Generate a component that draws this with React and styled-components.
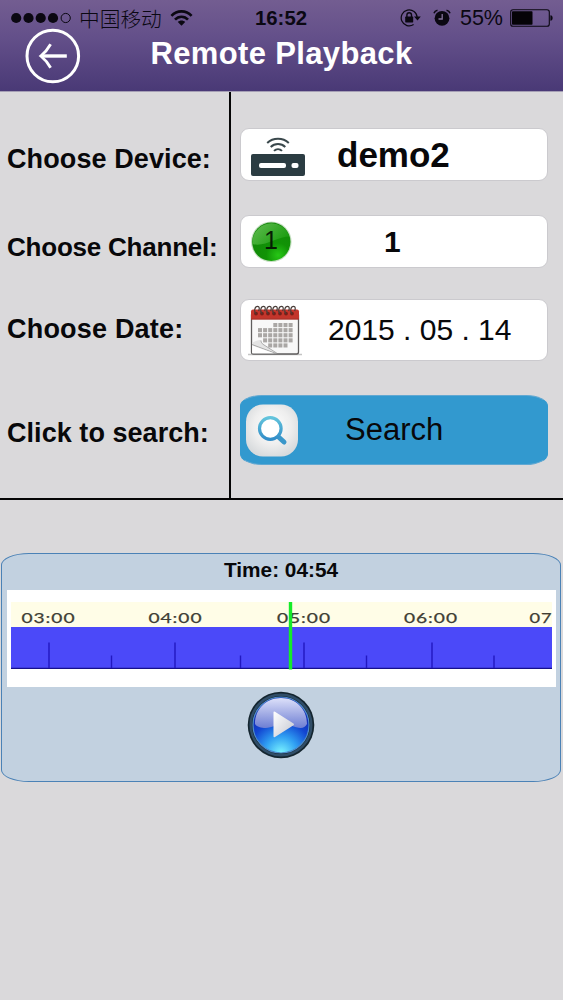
import React from "react"
import styled, { createGlobalStyle } from "styled-components"

const GlobalStyle = createGlobalStyle`
  body {
    margin: 0;
    background: #dad9db;
    font-family: "Liberation Sans", Arial, "Noto Sans CJK SC", sans-serif;
    color: #08080a;
  }
  * {
    box-sizing: border-box;
  }
  svg {
    display: block;
    flex: none;
  }
`

const Page = styled.div`
  width: 563px;
  height: 1000px;
  overflow: hidden;
`

const Header = styled.header`
  height: 92px;
  background: linear-gradient(#735d91, #64508a 40%, #493976);
  border-bottom: 1px solid #a59fb5;
`

const StatusBar = styled.div`
  display: grid;
  grid-template-columns: 1fr 60px 1fr;
  align-items: center;
  height: 36px;
  padding: 0 10px 0 11px;
  color: #0b0812;
`

const StatusGroup = styled.div`
  display: flex;
  align-items: center;
  justify-content: ${({ end }) => (end ? "flex-end" : "flex-start")};
`

const Carrier = styled.span`
  margin: 0 8px 0 7px;
  font-family: "Noto Sans CJK SC", sans-serif;
  font-size: 20.7px;
  font-weight: 300;
  line-height: 34px;
`

const Clock = styled.span`
  padding-right: 2px;
  font-size: 20.3px;
  font-weight: 700;
  text-align: center;
`

const Percent = styled.span`
  margin: 0 7px 0 9px;
  font-size: 21.5px;
`

const TitleBar = styled.div`
  display: grid;
  grid-template-columns: 80px 1fr 80px;
`

const BackButton = styled.button`
  width: 56px;
  height: 56px;
  margin: -8px 0 0 25px;
  padding: 0;
  border: 0;
  background: none;
`

const Title = styled.h1`
  margin: 0;
  font-size: 31px;
  line-height: 36px;
  letter-spacing: 0.35px;
  text-align: center;
  white-space: nowrap;
  color: #fff;
`

const Form = styled.section`
  display: grid;
  grid-template-columns: 231px 1fr;
  height: 408px;
  border-bottom: 2px solid #050505;
`

const Labels = styled.div`
  padding: 51px 0 0 7px;
  border-right: 2px solid #050505;
`

const Label = styled.div`
  height: 32px;
  margin-bottom: ${({ gap }) => gap || 0}px;
  font-size: ${({ size }) => size || 27}px;
  font-weight: 700;
  line-height: 32px;
  letter-spacing: ${({ tracking }) => tracking || 0}px;
  white-space: nowrap;
`

const Fields = styled.div`
  padding: 36px 15px 0 9px;
`

const Field = styled.button`
  display: grid;
  grid-template-columns: 64px 1fr;
  align-items: center;
  width: 308px;
  height: ${({ height }) => height}px;
  margin: 0 0 ${({ gap }) => gap}px;
  padding: 0;
  border: 1px solid #cbcace;
  border-radius: 9px;
  background: #fff;
  font-family: inherit;
  color: #08080a;
`

const SearchButton = styled(Field)`
  border-color: #61a8d2 #3299cf;
  border-radius: 22px / 11px;
  background: #3299cf;
`

const Value = styled.span`
  padding-left: ${({ indent }) => indent}px;
  font-size: ${({ size }) => size || 30}px;
  font-weight: ${({ bold }) => (bold ? 700 : 400)};
  line-height: 36px;
  text-align: left;
  white-space: pre;
`

const Player = styled.section`
  display: flex;
  flex-direction: column;
  align-items: center;
  width: 560px;
  height: 229px;
  margin: 53px 0 0 1px;
  border: 1px solid #4b82b6;
  border-radius: 28px / 12px;
  background: #c2d1e0;
`

const Time = styled.div`
  height: 36px;
  font-size: 20.8px;
  font-weight: 700;
  line-height: 31px;
`

const Timeline = styled.div`
  width: 549px;
  height: 97px;
  background: #fff;
`

const PlayButton = styled.button`
  margin-top: 4px;
  padding: 0;
  border: 0;
  background: none;
`

const SignalDots = () => (
  <svg width="61" height="14" viewBox="0 0 61 14">
    {[5.2, 17.5, 29.7, 42].map(x => (
      <circle key={x} cx={x} cy="7" r="5.1" fill="#0b0812" />
    ))}
    <circle cx="54.7" cy="7" r="4.6" fill="none" stroke="#0b0812" strokeWidth="1" />
  </svg>
)

const WifiIcon = () => (
  <svg width="23" height="16" viewBox="0 0 23 16">
    <g fill="none" stroke="#0b0812" strokeWidth="2.6">
      <path d="M1.4 5.9C7-.1 16-.1 21.6 5.9" />
      <path d="M5 9.6c3.6-3.9 9.4-3.9 13 0" />
    </g>
    <path d="M7.8 12c2-2 5.400-2 7.400 0L11.500 15.800z" fill="#0b0812" />
  </svg>
)

const LockIcon = () => (
  <svg width="22" height="20" viewBox="0 0 22 20">
    <path d="M13.600 16.600A8 8 0 1 1 17.200 9.500" fill="none" stroke="#0b0812" strokeWidth="1.200" />
    <path d="M14 8.500h6.800l-3.300 3.900z" fill="#0b0812" />
    <rect x="5.200" y="8.600" width="8" height="5.800" rx=".6" fill="#0b0812" />
    <path d="M6.900 9V7a2.300 2.300 0 0 1 4.600 0v2" fill="none" stroke="#0b0812" strokeWidth="1.400" />
  </svg>
)

const AlarmIcon = () => (
  <svg width="18" height="18" viewBox="0 0 18 18">
    <circle cx="9" cy="9.300" r="7.400" fill="#0b0812" />
    <path d="M1 4.200C1.500 2.600 2.800 1.500 4.500 1.200M17 4.200c-.5-1.600-1.800-2.700-3.500-3" fill="none" stroke="#0b0812" strokeWidth="1.600" />
    <path d="M9.200 5v5H5.500" fill="none" stroke="#85739c" strokeWidth="1.300" />
  </svg>
)

const BatteryIcon = () => (
  <svg width="43" height="18" viewBox="0 0 43 18">
    <rect x=".7" y=".7" width="38.600" height="16.600" rx="2.300" fill="none" stroke="#0b0812" strokeWidth="1.100" />
    <rect x="2" y="2.200" width="20.500" height="13.600" rx=".8" fill="#050307" />
    <path d="M40.400 6.200c3 0 3 5.600 0 5.600z" fill="#0b0812" />
  </svg>
)

const BackIcon = () => (
  <svg width="56" height="56" viewBox="0 0 56 56" fill="none" stroke="#fff">
    <circle cx="27.800" cy="28" r="25.800" strokeWidth="3" />
    <path d="M41.800 28H16" strokeWidth="3.400" />
    <path d="M25.600 16.300C23 21 19.500 25 15.800 28c3.700 3 7.200 7 9.800 11.700" strokeWidth="2.800" />
  </svg>
)

const RouterIcon = () => (
  <svg width="64" height="50" viewBox="0 0 64 50">
    <rect x="10" y="24" width="54" height="22" rx="2" fill="#2b3c42" />
    <rect x="18" y="33" width="27" height="5" rx="2" fill="#fff" />
    <rect x="50.500" y="33" width="7" height="5" rx="2" fill="#fff" />
    <g fill="none" stroke="#3a484c" strokeWidth="2">
      <path d="M26.200 12.900c6-5.600 15.600-5.600 21.600 0" />
      <path d="M29.700 17c4-3.900 10.600-3.900 14.600 0" />
      <path d="M33 20.900c2.300-2.300 5.700-2.300 8 0" />
    </g>
  </svg>
)

const ChannelIcon = () => (
  <svg width="64" height="50" viewBox="0 0 64 50">
    <defs>
      <radialGradient id="ball" cx=".68" cy=".85" r=".9">
        <stop offset="0" stopColor="#27c716" />
        <stop offset=".35" stopColor="#119306" />
        <stop offset="1" stopColor="#128509" />
      </radialGradient>
      <linearGradient id="ballShine" x1="0" y1="0" x2="1" y2=".6">
        <stop offset="0" stopColor="#7fd06c" />
        <stop offset="1" stopColor="#1da012" />
      </linearGradient>
    </defs>
    <circle cx="30.300" cy="24.800" r="20.300" fill="#c6dfc2" />
    <circle cx="30.300" cy="24.800" r="19.200" fill="url(#ball)" />
    <path d="M11.500 27A19 19 0 0 1 48.500 19.500C37 19.500 23 30.500 11.500 27z" fill="url(#ballShine)" opacity=".75" />
    <text x="30" y="32" textAnchor="middle" fontSize="25" fill="#071c05">1</text>
  </svg>
)

// columns that hold a day square, one list for each week
const dayRows = [
  [3, 4, 5, 6],
  [0, 1, 2, 3, 4, 5, 6],
  [0, 1, 2, 3, 4, 5, 6],
  [1, 2, 3, 4, 5, 6],
  [2, 3, 4, 5],
]

const CalendarIcon = () => (
  <svg width="64" height="58" viewBox="0 0 64 58">
    <path d="M7 53.500h54" stroke="#c4c4c4" strokeWidth="1.500" />
    <rect x="10.500" y="12" width="47" height="41" rx="2" fill="#f8f8f8" stroke="#5f5d5d" strokeWidth="1.300" />
    <path d="M10 18.500v-8q0-2 2-2h44q2 0 2 2v8z" fill="#c3352b" />
    <path d="M10 18h48" stroke="#9d3029" strokeWidth=".8" />
    {[15, 21, 27, 33, 39, 45, 51].map(x => (
      <g key={x} fill="none">
        <circle cx={x} cy="12.600" r="1.900" fill="#74201a" />
        <path d={`M${x} 12.500c-2.500-2-1.200-7.200 1.600-7.200 2 0 2 2.700 1 4.700`} stroke="#493d39" strokeWidth="1.200" />
      </g>
    ))}
    {dayRows.map((row, r) =>
      row.map(c => (
        <rect key={`${r}-${c}`} x={17 + c * 5.1} y={22 + r * 5.1} width="4" height="4.100" fill="#aaa7a5" />
      ))
    )}
    <path d="M11 42c3.500-2 6-3 9-3 0 2 1.300 4 3 5l12.500 8.300H11z" fill="#e4e4e4" />
    <path d="M11 43.500 35 52.500M20 39.500c0 2 1 3 2 3.800l14 9" fill="none" stroke="#9a9a9a" strokeWidth=".8" />
    <path d="M11.200 44.500 33 52.300H11.200z" fill="#fff" />
  </svg>
)

const SearchIcon = () => (
  <svg width="64" height="67" viewBox="0 0 64 67">
    <defs>
      <radialGradient id="tile" cx=".5" cy=".42" r=".6">
        <stop offset="0" stopColor="#fff" />
        <stop offset=".6" stopColor="#eee" />
        <stop offset="1" stopColor="#d8dbdd" />
      </radialGradient>
      <linearGradient id="lens" x1="0" y1="0" x2="0" y2="1">
        <stop offset="0" stopColor="#63c4dc" />
        <stop offset="1" stopColor="#328dc8" />
      </linearGradient>
    </defs>
    <rect x="5" y="7.500" width="52" height="52" rx="17" fill="url(#tile)" />
    <path d="m37 39.500 6 5.500" stroke="#3a97ca" strokeWidth="5" strokeLinecap="round" />
    <circle cx="29.300" cy="31.500" r="10.800" fill="#fff" stroke="url(#lens)" strokeWidth="3.200" />
  </svg>
)

const PlayIcon = () => (
  <svg width="68" height="68" viewBox="0 0 68 68">
    <defs>
      <radialGradient id="glass" cx=".5" cy="1" r=".75">
        <stop offset="0" stopColor="#7cf6ff" />
        <stop offset=".4" stopColor="#2f9ef2" />
        <stop offset=".75" stopColor="#1246d2" />
        <stop offset="1" stopColor="#1430b8" />
      </radialGradient>
      <linearGradient id="gloss" x1="0" y1="0" x2="0" y2="1">
        <stop offset="0" stopColor="#eef0ff" />
        <stop offset="1" stopColor="#7583d4" />
      </linearGradient>
      <linearGradient id="arrow" x1="0" y1="0" x2="1" y2="1">
        <stop offset="0" stopColor="#fff" />
        <stop offset="1" stopColor="#c3c6d0" />
      </linearGradient>
    </defs>
    <circle cx="34" cy="34" r="33.300" fill="#14252f" />
    <circle cx="34" cy="34" r="30.300" fill="none" stroke="#304d67" strokeWidth="2.500" />
    <circle cx="34" cy="34" r="28" fill="url(#glass)" stroke="#4e8ccc" strokeWidth="1.200" />
    <path d="M8 33C8 18 19 7 34 7s26 11 26 26c-3 6-9 4-16 1.500C32 30 26 38 17 37c-5-.4-8-2-9-4z" fill="url(#gloss)" opacity=".92" />
    <path d="M26.500 21.500q0-1.700 1.500-.7l18.500 11.700q1.200.9 0 1.700L28 46q-1.500.8-1.500-.7z" fill="url(#arrow)" />
  </svg>
)

const hours = [
  { text: "03:00", x: 14.5, length: 54 },
  { text: "04:00", x: 141.5, length: 54 },
  { text: "05:00", x: 270, length: 54 },
  { text: "06:00", x: 397, length: 54 },
  { text: "07", x: 522.5, length: 23 },
]
const hourTicks = [42, 168, 297, 425]
const halfTicks = [104.5, 233.5, 359.5, 487]

const TimelineChart = () => (
  <svg width="549" height="97" viewBox="0 0 549 97">
    <rect x="4" y="12" width="541" height="26" fill="#fffde7" />
    <rect x="4" y="37" width="541" height="41.500" fill="#4b49f9" />
    <path d="M4 78.300h541" stroke="#17108c" strokeWidth="1.300" />
    <g stroke="#2118c0" strokeWidth="1.400">
      {hourTicks.map(x => (
        <path key={x} d={`M${x} 52.500V78`} />
      ))}
      {halfTicks.map(x => (
        <path key={x} d={`M${x} 65.500V78`} />
      ))}
    </g>
    <g fontFamily="Lato, sans-serif" fontSize="14" letterSpacing=".7" fill="#403e35" stroke="#403e35" strokeWidth=".25">
      {hours.map(({ text, x, length }) => (
        <text key={text} x={x} y="32.500" textLength={length} lengthAdjust="spacingAndGlyphs">
          {text}
        </text>
      ))}
    </g>
    <rect x="281.800" y="12" width="3.400" height="67.500" fill="#15eb2a" />
  </svg>
)

const StatusIcons = styled.div`
  display: flex;
  align-items: center;
  gap: 11px;
`

const App = () => (
  <Page>
    <GlobalStyle />
    <Header>
      <StatusBar>
        <StatusGroup>
          <SignalDots />
          <Carrier>中国移动</Carrier>
          <WifiIcon />
        </StatusGroup>
        <Clock>16:52</Clock>
        <StatusGroup end>
          <StatusIcons>
            <LockIcon />
            <AlarmIcon />
          </StatusIcons>
          <Percent>55%</Percent>
          <BatteryIcon />
        </StatusGroup>
      </StatusBar>
      <TitleBar>
        <BackButton aria-label="Back">
          <BackIcon />
        </BackButton>
        <Title>Remote Playback</Title>
      </TitleBar>
    </Header>
    <Form>
      <Labels>
        <Label gap={56} tracking={0.1}>Choose Device:</Label>
        <Label gap={50} size={26} tracking={-0.22}>Choose Channel:</Label>
        <Label gap={72} tracking={0.2}>Choose Date:</Label>
        <Label tracking={0.05}>Click to search:</Label>
      </Labels>
      <Fields>
        <Field height={53} gap={34}>
          <RouterIcon />
          <Value bold size={35} indent={32}>demo2</Value>
        </Field>
        <Field height={53} gap={31}>
          <ChannelIcon />
          <Value bold indent={79}>1</Value>
        </Field>
        <Field height={62} gap={34}>
          <CalendarIcon />
          <Value indent={23}>2015 . 05 . 14</Value>
        </Field>
        <SearchButton height={70} gap={0}>
          <SearchIcon />
          <Value size={31} indent={40}>Search</Value>
        </SearchButton>
      </Fields>
    </Form>
    <Player>
      <Time>Time: 04:54</Time>
      <Timeline>
        <TimelineChart />
      </Timeline>
      <PlayButton aria-label="Play">
        <PlayIcon />
      </PlayButton>
    </Player>
  </Page>
)

export default App
